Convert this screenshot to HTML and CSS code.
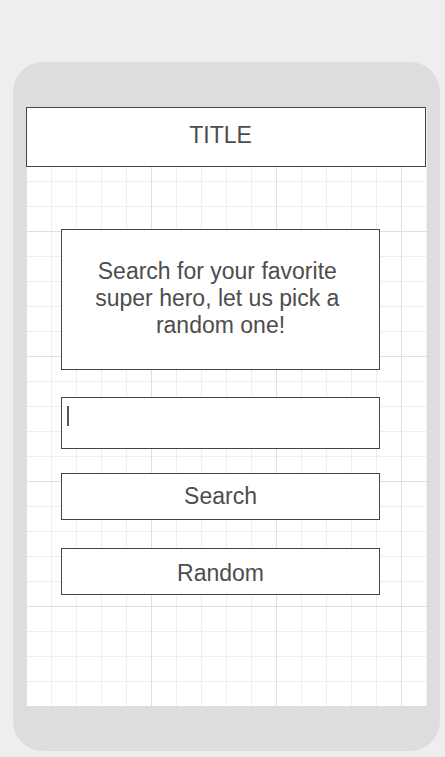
FILE: index.html
```html
<!DOCTYPE html>
<html>
<head>
<meta charset="utf-8">
<link rel="stylesheet" href="styles.css">
</head>
<body>
<div class="phone">
  <div class="screen">
    <div class="title-bar"><span class="title">TITLE</span></div>
    <div class="content">
      <div class="intro">Search for your favorite super hero, let us pick a random one!</div>
      <div class="input"><span class="cursor"></span></div>
      <div class="button btn-search">Search</div>
      <div class="button btn-random">Random</div>
    </div>
  </div>
</div>
</body>
</html>
```

FILE: styles.css
```css
html, body {
  margin: 0;
  padding: 0;
}
body {
  background: #eeeeee;
  font-family: "Liberation Sans", Arial, sans-serif;
  color: #4d4d4d;
  width: 445px;
  height: 757px;
  overflow: hidden;
}
.phone {
  margin: 62px 0 0 13px;
  width: 427px;
  height: 689px;
  box-sizing: border-box;
  padding: 45px 13px;
  background: #dddddd;
  border-radius: 30px;
}
.screen {
  width: 401px;
  height: 599px;
  background-color: #ffffff;
  background-image:
    linear-gradient(to right, #e0e0e0 1px, transparent 1px),
    linear-gradient(to bottom, #e0e0e0 1px, transparent 1px),
    linear-gradient(to right, #eeeeee 1px, transparent 1px),
    linear-gradient(to bottom, #eeeeee 1px, transparent 1px);
  background-size: 125px 125px, 125px 125px, 25px 25px, 25px 25px;
  background-position: 0 0, 0 -1px, 0 0, 0 -1px;
  display: flex;
  flex-direction: column;
}
.title-bar {
  width: 400px;
  height: 60px;
  box-sizing: border-box;
  border: 1px solid #444444;
  background: #ffffff;
  display: flex;
  justify-content: center;
  padding: 15px 11px 0 0;
}
.title {
  font-size: 23px;
  line-height: 24px;
}
.content {
  display: flex;
  flex-direction: column;
  padding: 62px 0 0 35px;
}
.intro, .input, .button {
  width: 319px;
  box-sizing: border-box;
  border: 1px solid #444444;
  background: #ffffff;
}
.intro {
  height: 141px;
  display: flex;
  align-items: center;
  justify-content: center;
  text-align: center;
  padding: 0 18px 2px 18px;
  font-size: 23px;
  line-height: 27px;
  white-space: break-spaces;
}
.input {
  margin-top: 27px;
  height: 52px;
  display: flex;
  align-items: flex-start;
}
.cursor {
  display: block;
  width: 2px;
  height: 20px;
  margin: 8px 0 0 5px;
  background: #555555;
}
.button {
  height: 47px;
  display: flex;
  align-items: center;
  justify-content: center;
  font-size: 23px;
  line-height: 24px;
}
.btn-search {
  margin-top: 24px;
  padding-bottom: 1px;
}
.btn-random {
  margin-top: 28px;
  padding-top: 2px;
}
```
